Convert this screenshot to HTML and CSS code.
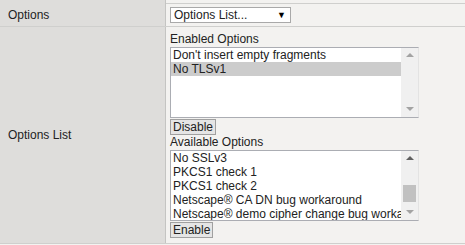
FILE: index.html
```html
<!DOCTYPE html>
<html lang="en">
<head>
  <meta charset="UTF-8" />
  <title>Options</title>
  <link rel="stylesheet" href="styles.css">
</head>
<body>

<div class="table">
  <div class="row top">
    <div class="label"></div>
    <div class="value"></div>
  </div>

  <div class="row">
    <div class="label">Options</div>
    <div class="value">
      <div class="select">
        <span>Options List...</span>
        <span class="arrow">&#9660;</span>
      </div>
    </div>
  </div>

  <div class="row">
    <div class="label">Options List</div>
    <div class="value stack">
      <div class="caption">Enabled Options</div>
      <div class="listbox">
        <div class="items">
          <div class="item">Don't insert empty fragments</div>
          <div class="item selected">No TLSv1</div>
        </div>
        <div class="scroll">
          <span class="up"></span>
          <span class="down"></span>
        </div>
      </div>
      <button class="btn">Disable</button>

      <div class="caption">Available Options</div>
      <div class="listbox">
        <div class="items">
          <div class="item">No SSLv3</div>
          <div class="item">PKCS1 check 1</div>
          <div class="item">PKCS1 check 2</div>
          <div class="item">Netscape&reg; CA DN bug workaround</div>
          <div class="item">Netscape&reg; demo cipher change bug workaround</div>
        </div>
        <div class="scroll active">
          <span class="up"></span>
          <span class="thumb"></span>
          <span class="down"></span>
        </div>
      </div>
      <button class="btn">Enable</button>
    </div>
  </div>
</div>

</body>
</html>
```

FILE: styles.css
```css
body {
  margin: 0;
  font-family: "Liberation Sans", Arial, sans-serif;
  font-size: 12px;
  color: #222;
  background: #f3f2f0;
}
.row {
  display: grid;
  grid-template-columns: 166px 1fr;
  border-bottom: 1px solid #cfcfcd;
}
.row.top {
  height: 3px;
}
.label {
  background: #dedddb;
  border-right: 1px solid #c4c4c2;
  padding-left: 8px;
  display: flex;
  align-items: center;
}
.value {
  padding: 3px 4px 3px 4px;
}
.select {
  width: 113px;
  height: 14px;
  border: 1px solid #a9a9a9;
  background: #fff;
  display: flex;
  justify-content: space-between;
  align-items: center;
  padding: 0 3px 0 3px;
  line-height: 14px;
}
.select .arrow {
  font-size: 9px;
  color: #000;
  margin-right: 1px;
}
.stack {
  padding: 4px 4px 5px 4px;
}
.caption {
  line-height: 16px;
}
.btn + .caption {
  line-height: 15px;
}
.listbox {
  width: 247px;
  height: 69px;
  border: 1px solid #abadb3;
  border-right-color: #e3e3e3;
  background: #fff;
  display: flex;
}
.items {
  flex: 1;
  overflow: hidden;
  white-space: nowrap;
}
.item {
  height: 14px;
  line-height: 14px;
  padding-left: 2px;
}
.item.selected {
  background: #cccccc;
}
.scroll {
  width: 17px;
  background: #f0f0f0;
  position: relative;
}
.scroll .up,
.scroll .down {
  position: absolute;
  left: 5px;
  width: 0;
  height: 0;
  border-left: 4px solid transparent;
  border-right: 4px solid transparent;
}
.scroll .up {
  top: 5px;
  border-bottom: 4px solid #a3a3a3;
}
.scroll .down {
  bottom: 6px;
  border-top: 4px solid #a3a3a3;
}
.scroll.active .up {
  border-bottom-color: #606060;
}
.scroll .thumb {
  position: absolute;
  left: 2px;
  top: 34px;
  width: 13px;
  height: 17px;
  background: #c1c1c1;
}
.btn {
  display: block;
  margin: 1px 0 0 0;
  height: 16px;
  padding: 0 2px;
  font-family: "Liberation Sans", Arial, sans-serif;
  font-size: 12px;
  color: #222;
  background: #e5e5e5;
  border: 1px solid #a0a0a0;
  line-height: 13px;
}
```
